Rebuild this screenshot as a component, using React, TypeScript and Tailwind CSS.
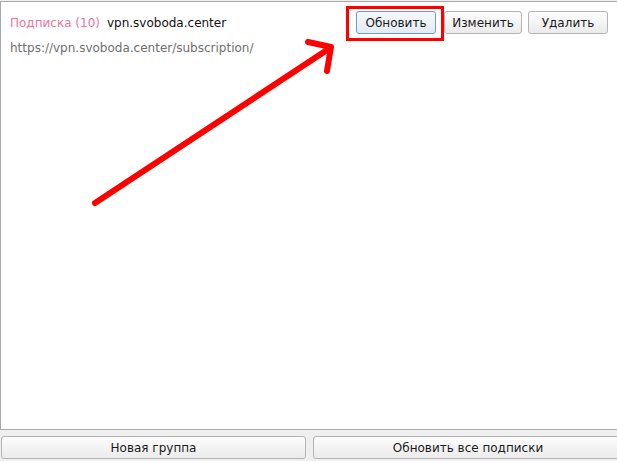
import React from 'react';

function Btn({ label, focused, className }: { label: string; focused?: boolean; className?: string }) {
  return (
    <button
      className={`h-[23px] shrink-0 rounded-[3px] border bg-gradient-to-b text-[12px] text-[#1b1b1b] ${
        focused
          ? 'border-[#6f9cc7] from-[#f4f8fb] to-[#e3ebf2]'
          : 'border-[#b4b4b4] from-[#fdfdfd] to-[#ebebeb]'
      } ${className ?? ''}`}
    >
      {label}
    </button>
  );
}

export default function App() {
  return (
    <div className="relative h-[461px] w-[617px] overflow-hidden bg-[#efefef] font-['DejaVu_Sans',sans-serif]">
      {/* subscription list */}
      <div className="mt-px h-[429px] w-[640px] border border-[#a9a9a9] bg-white">
        <div className="flex items-start pl-[9px] pt-[9px]">
          <div>
            <div className="flex h-[24px] items-center gap-[7px] text-[12px]">
              <span className="text-[#f0749d]">Подписка (10)</span>
              <span className="text-[#111]">vpn.svoboda.center</span>
            </div>
            <div className="mt-[4px] text-[12px] text-[#707070]">https://vpn.svoboda.center/subscription/</div>
          </div>
          <div className="ml-auto mr-[31px] flex">
            <Btn label="Обновить" focused className="w-[80px]" />
            <Btn label="Изменить" className="ml-[8px] w-[78px]" />
            <Btn label="Удалить" className="ml-[6px] w-[80px]" />
          </div>
        </div>
      </div>

      <div className="mt-[6px] flex gap-[7px] pl-px">
        <Btn label="Новая группа" className="w-[305px]" />
        <Btn label="Обновить все подписки" className="w-[310px]" />
      </div>

      {/* annotation overlay */}
      <svg className="pointer-events-none absolute left-0 top-0" width="617" height="461">
        <rect x="347.5" y="7.5" width="95" height="32" fill="none" stroke="#ff0000" strokeWidth="3" />
        <g stroke="#ff0000" strokeWidth="6" strokeLinecap="round" fill="none">
          <line x1="95" y1="203" x2="330" y2="48" />
          <polyline points="308,42 331,47 327,71" strokeLinejoin="round" />
        </g>
      </svg>
    </div>
  );
}
